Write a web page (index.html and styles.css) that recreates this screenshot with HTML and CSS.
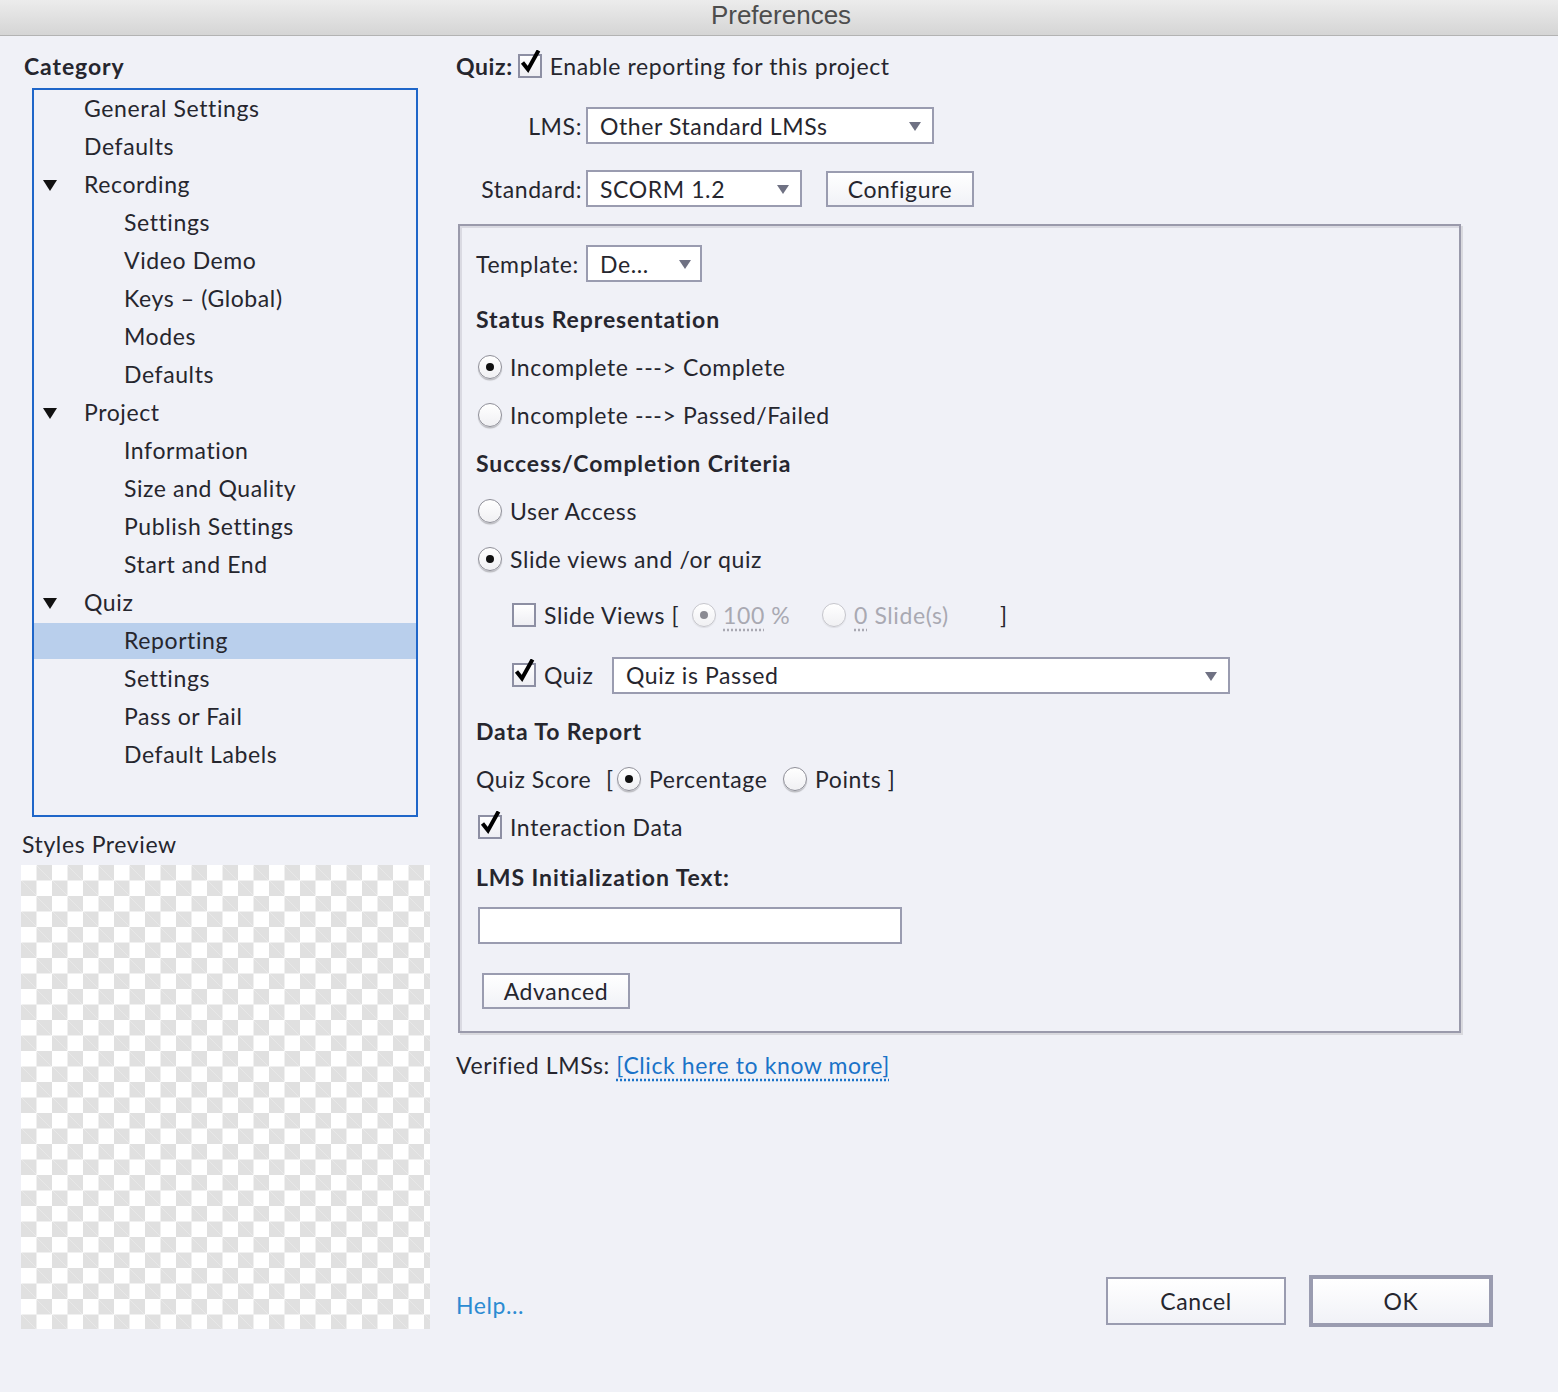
FILE: index.html
```html
<!DOCTYPE html>
<html lang="en">
<head>
<meta charset="utf-8">
<title>Preferences</title>
<link rel="stylesheet" href="styles.css">
</head>
<body>
<div class="window">
  <div class="titlebar">Preferences</div>
  <div class="main">
    <div class="left">
      <div class="cat-title">Category</div>
      <div class="tree">
        <div class="item l1"><span class="arr"></span>General Settings</div>
        <div class="item l1"><span class="arr"></span>Defaults</div>
        <div class="item l1"><span class="arr"><svg width="14" height="11" viewBox="0 0 14 11"><path d="M0 0H14L7 11Z" fill="#111"/></svg></span>Recording</div>
        <div class="item l2"><span class="arr"></span>Settings</div>
        <div class="item l2"><span class="arr"></span>Video Demo</div>
        <div class="item l2"><span class="arr"></span>Keys – (Global)</div>
        <div class="item l2"><span class="arr"></span>Modes</div>
        <div class="item l2"><span class="arr"></span>Defaults</div>
        <div class="item l1"><span class="arr"><svg width="14" height="11" viewBox="0 0 14 11"><path d="M0 0H14L7 11Z" fill="#111"/></svg></span>Project</div>
        <div class="item l2"><span class="arr"></span>Information</div>
        <div class="item l2"><span class="arr"></span>Size and Quality</div>
        <div class="item l2"><span class="arr"></span>Publish Settings</div>
        <div class="item l2"><span class="arr"></span>Start and End</div>
        <div class="item l1"><span class="arr"><svg width="14" height="11" viewBox="0 0 14 11"><path d="M0 0H14L7 11Z" fill="#111"/></svg></span>Quiz</div>
        <div class="item l2 selected"><span class="arr"></span>Reporting</div>
        <div class="item l2"><span class="arr"></span>Settings</div>
        <div class="item l2"><span class="arr"></span>Pass or Fail</div>
        <div class="item l2"><span class="arr"></span>Default Labels</div>
      </div>
      <div class="preview-title">Styles Preview</div>
      <div class="checker"></div>
    </div>

    <div class="right">
      <div class="quiz-row">
        <span class="bold">Quiz:</span>
        <span class="cb checked"><svg width="26" height="26" viewBox="0 0 26 26"><path d="M4.5 12.5L10 19.5L20.5 0.5" fill="none" stroke="#000" stroke-width="4"/></svg></span>
        <span>Enable reporting for this project</span>
      </div>

      <div class="form-grid">
        <span class="flabel">LMS:</span>
        <div class="field">
          <div class="select sel-lms"><span>Other Standard LMSs</span><span class="caret"></span></div>
        </div>
        <span class="flabel">Standard:</span>
        <div class="field">
          <div class="select sel-std"><span>SCORM 1.2</span><span class="caret"></span></div>
          <div class="btn btn-config">Configure</div>
        </div>
      </div>

      <div class="group">
        <div class="tpl-row">
          <span class="tpl-label">Template:</span>
          <div class="select sel-tpl"><span>De...</span><span class="caret"></span></div>
        </div>
        <div class="row h48 first bold">Status Representation</div>
        <div class="row h48"><span class="radio on"></span>Incomplete ---&gt; Complete</div>
        <div class="row h48"><span class="radio"></span>Incomplete ---&gt; Passed/Failed</div>
        <div class="row h48 bold">Success/Completion Criteria</div>
        <div class="row h48"><span class="radio"></span>User Access</div>
        <div class="row h48"><span class="radio on"></span>Slide views and /or quiz</div>
        <div class="row h64 indent">
          <span class="cb"></span>
          <span class="sv-label">Slide Views [</span>
          <span class="radio on dis"></span>
          <span class="dis-text pct"><u>100</u> %</span>
          <span class="radio dis"></span>
          <span class="dis-text sl"><u>0</u> Slide(s)</span>
          <span class="bracket">]</span>
        </div>
        <div class="row h56 indent">
          <span class="cb checked"><svg width="26" height="26" viewBox="0 0 26 26"><path d="M4.5 12.5L10 19.5L20.5 0.5" fill="none" stroke="#000" stroke-width="4"/></svg></span>
          <span class="quiz-label">Quiz</span>
          <div class="select sel-quiz"><span>Quiz is Passed</span><span class="caret"></span></div>
        </div>
        <div class="row h48 data bold">Data To Report</div>
        <div class="row h48">
          <span class="qs-label">Quiz Score</span>
          <span class="lbr">[</span>
          <span class="radio on r-pct"></span>
          <span class="pct-label">Percentage</span>
          <span class="radio r-pts"></span>
          <span>Points ]</span>
        </div>
        <div class="row h48">
          <span class="cb checked ml2"><svg width="26" height="26" viewBox="0 0 26 26"><path d="M4.5 12.5L10 19.5L20.5 0.5" fill="none" stroke="#000" stroke-width="4"/></svg></span>
          <span>Interaction Data</span>
        </div>
        <div class="row h52 bold">LMS Initialization Text:</div>
        <div class="textinput"></div>
        <div class="btn btn-adv">Advanced</div>
      </div>

      <div class="verified">Verified LMSs: <a class="link" href="#">[Click here to know more]</a></div>

      <div class="footer">
        <a class="help" href="#">Help...</a>
        <div class="buttons">
          <div class="btn btn-cancel">Cancel</div>
          <div class="btn btn-ok">OK</div>
        </div>
      </div>
    </div>
  </div>
</div>
</body>
</html>
```

FILE: styles.css
```css
* { box-sizing: border-box; }

html, body {
  margin: 0;
  padding: 0;
  background: #f0f1f7;
}

body {
  font-family: Lato, "Open Sans", sans-serif;
  font-size: 23px;
  letter-spacing: 0.6px;
  color: #26262e;
  width: 1558px;
  height: 1392px;
  overflow: hidden;
}

.titlebar {
  height: 36px;
  background: linear-gradient(#ececec, #d5d5d5);
  border-bottom: 1px solid #b3b3b3;
  text-align: center;
  font-family: "Liberation Sans", Arial, sans-serif;
  font-size: 26px;
  letter-spacing: 0;
  line-height: 31px;
  color: #4d4d4d;
  padding-left: 4px;
}

.main {
  display: flex;
}

/* ---------- left column ---------- */
.left {
  width: 456px;
  padding-left: 21px;
  flex-shrink: 0;
}

.cat-title {
  font-weight: bold;
  letter-spacing: 0.9px;
  margin-top: 16px;
  padding-left: 3px;
  height: 28px;
  line-height: 28px;
}

.tree {
  margin-top: 8px;
  margin-left: 11px;
  width: 386px;
  height: 729px;
  border: 2px solid #1f66c9;
}

.item {
  display: flex;
  align-items: center;
  height: 38px;
  padding-left: 9px;
  padding-bottom: 3px;
}

.item .arr {
  width: 41px;
  display: inline-flex;
  align-items: center;
  padding-top: 3px;
}

.item.l2 .arr { width: 81px; }

.item.selected {
  background: #b9cfec;
  height: 36px;
  margin: 1px 0;
}

.preview-title {
  margin-top: 13px;
  padding-left: 1px;
  height: 28px;
  line-height: 28px;
}

.checker {
  margin-top: 7px;
  width: 409px;
  height: 464px;
  background-color: #ffffff;
  background-image:
    linear-gradient(45deg, #e0e0e0 25%, transparent 25%, transparent 75%, #e0e0e0 75%),
    linear-gradient(45deg, #e0e0e0 25%, transparent 25%, transparent 75%, #e0e0e0 75%);
  background-size: 31px 31px;
  background-position: 0 0, 15.5px 15.5px;
}

/* ---------- right column ---------- */
.right {
  flex: 1;
  padding-right: 65px;
}

.bold { font-weight: bold; letter-spacing: 0.9px; }

.quiz-row {
  display: flex;
  align-items: center;
  height: 28px;
  margin-top: 16px;
}

.quiz-row .bold { letter-spacing: 0.6px; }
.quiz-row .cb { margin: 0 8px 0 5px; }

.cb {
  position: relative;
  width: 24px;
  height: 24px;
  border: 2px solid #8d8fa3;
  background: linear-gradient(#ffffff, #eeeef3);
  flex-shrink: 0;
  display: inline-block;
}

.cb svg {
  position: absolute;
  left: -2px;
  top: -6px;
}

.form-grid {
  display: grid;
  grid-template-columns: 126px auto;
  column-gap: 4px;
  row-gap: 26px;
  align-items: center;
  margin-top: 27px;
}

.flabel { text-align: right; }

.field {
  display: flex;
  align-items: center;
}

.select {
  display: flex;
  align-items: center;
  justify-content: space-between;
  height: 37px;
  background: #ffffff;
  border: 2px solid #9a9cb0;
  padding: 0 11px 0 12px;
}

.caret {
  width: 0;
  height: 0;
  border-left: 6px solid transparent;
  border-right: 6px solid transparent;
  border-top: 9px solid #6f7183;
  margin-top: 2px;
}

.sel-lms { width: 348px; }
.sel-std { width: 216px; }
.sel-tpl { width: 116px; padding-right: 9px; }
.sel-quiz { width: 618px; }

.btn {
  display: flex;
  align-items: center;
  justify-content: center;
  border: 2px solid #9a9cb0;
  background: linear-gradient(#ffffff, #f1f2f7);
}

.btn-config {
  width: 148px;
  height: 36px;
  margin-left: 24px;
}

.group {
  margin-top: 17px;
  margin-left: 2px;
  width: 1003px;
  border: 2px solid #9a9aab;
  box-shadow: 2px 2px 0 #d9d9de, inset 2px 2px 0 #dadae2;
  padding: 19px 16px 22px 16px;
}

.tpl-row {
  display: flex;
  align-items: center;
  height: 37px;
}

.tpl-label { width: 110px; }

.row {
  display: flex;
  align-items: center;
}

.row .radio,
.row > .cb { margin-right: 8px; }

.row > .cb.ml2 { margin-left: 2px; }

.h48 { height: 48px; }
.h52 { height: 52px; }
.h56 { height: 56px; }
.h64 { height: 64px; }

.row.first { margin-top: 13px; }
.row.data { margin-top: 4px; }
.row.indent { padding-left: 36px; }

.radio {
  position: relative;
  width: 24px;
  height: 24px;
  border-radius: 50%;
  border: 1px solid #8f8f98;
  background: linear-gradient(#ffffff, #f0f0f3);
  box-shadow: 0 1.5px 1px rgba(0,0,0,0.22);
  flex-shrink: 0;
  display: inline-block;
  margin-left: 2px;
}

.radio.on::after {
  content: "";
  position: absolute;
  left: 7px;
  top: 7px;
  width: 8px;
  height: 8px;
  border-radius: 50%;
  background: #111;
}

.radio.dis {
  border-color: #c6c6cc;
  box-shadow: 0 1px 1px rgba(0,0,0,0.08);
}

.radio.dis.on::after { background: #8a8a92; }

.sv-label { width: 146px; }
.row .pct { width: 97px; margin-left: -1px; }
.dis-text { color: #a9a9b2; }
.dis-text u {
  text-decoration: underline dotted #a9a9b2;
  text-underline-offset: 5px;
}

.row .sl { width: 146px; }
.bracket { margin-left: 0; }

.quiz-label { width: 68px; }

.qs-label { width: 130px; }
.lbr { width: 11px; }
.row .r-pct { margin-left: 0; margin-right: 8px; }
.pct-label { width: 134px; }
.row .r-pts { margin-left: 0; margin-right: 8px; }

.textinput {
  margin-top: 4px;
  margin-left: 2px;
  width: 424px;
  height: 37px;
  background: #ffffff;
  border: 2px solid #9a9cb0;
}

.btn-adv {
  margin-top: 29px;
  margin-left: 6px;
  width: 148px;
  height: 36px;
}

.verified {
  margin-top: 18px;
  height: 28px;
  line-height: 28px;
}

.link {
  color: #1a73c8;
  text-decoration: underline dotted #1a73c8;
  text-underline-offset: 5px;
}

.footer {
  display: flex;
  align-items: center;
  justify-content: space-between;
  margin-top: 196px;
}

.help {
  color: #2b8bd2;
  text-decoration: none;
  margin-top: 8px;
}

.buttons {
  display: flex;
  align-items: center;
  gap: 23px;
}

.btn-cancel {
  width: 180px;
  height: 48px;
}

.btn-ok {
  width: 184px;
  height: 52px;
  border-width: 4px;
}
```
